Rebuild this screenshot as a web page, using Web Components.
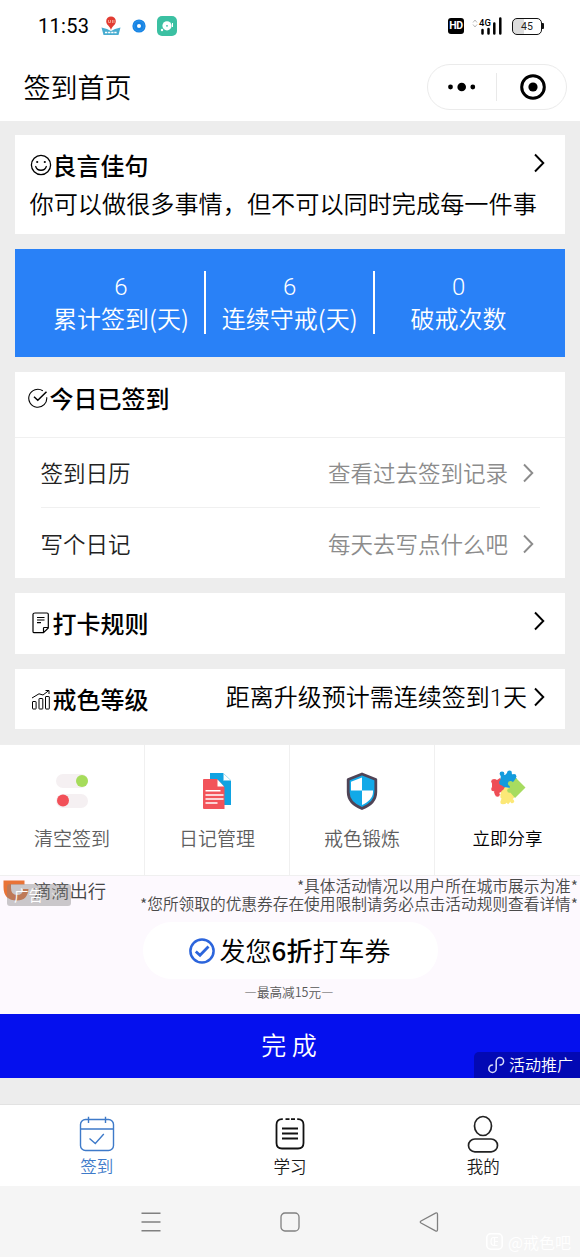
<!DOCTYPE html>
<html lang="zh-CN">
<head>
<meta charset="utf-8">
<title>签到首页</title>
<style>
html,body{margin:0;padding:0}
body{width:580px;height:1257px;overflow:hidden;background:#ededed;color:#000;font-family:"Noto Sans CJK SC",sans-serif;font-weight:350;line-height:1}
</style>
</head>
<body>
<checkin-app></checkin-app>
<script>
const define = (name, css, html) => {
  const t = document.createElement('template');
  t.innerHTML = `<style>*{box-sizing:border-box}:host{display:block;box-sizing:border-box;white-space:nowrap}svg{display:block}${css}</style>${html}`;
  customElements.define(name, class extends HTMLElement {
    constructor() {
      super();
      this.attachShadow({ mode: 'open' }).append(t.content.cloneNode(true));
    }
  });
};

const icons = {
  map: [20, 20, `<path d="M.5 11.500 6 13l4 2 4-2 5.500-1.500-2 7.500H2.500z" fill="#48acd0"/><path d="M4 16.500h12" stroke="#fff" stroke-width="1.600" stroke-dasharray="2.300 .8"/><path d="M10 14C9 10 5.200 9 5.200 5.200a4.800 4.800 0 0 1 9.600 0C14.800 9 11 10 10 14z" fill="#e23c32"/><path d="M7.500 4v2.500h2V4M11.500 4v3M13 4v3" stroke="#f7b2a0" fill="none" stroke-width=".8"/>`],
  blueDot: [14, 14, `<circle cx="7" cy="7" r="6.600" fill="#1684e4"/><circle cx="7" cy="7" r="5" fill="none" stroke="#2f93ea"/><circle cx="7" cy="7" r="2" fill="#fff"/>`],
  green: [20, 20, `<rect width="20" height="20" rx="5" fill="#3bc0a2"/><circle cx="10" cy="9.800" r="4.600" fill="#fff"/><circle cx="10" cy="9.800" r=".9" fill="#3bc0a2"/><circle cx="5" cy="14" r="1.200" fill="#fff"/><path d="M15.500 7v4" stroke="#fff"/>`],
  signal: [31, 18, `<path d="M1 5.500 3 3l2 2.500M1 7.500 3 10l2-2.500" fill="none" stroke="#aaa" stroke-width=".8"/><path d="M10.500 13v3.500M16.500 12v4.500M22.300 6.500v10M28.300 1.500v15" stroke="#000" stroke-width="2.500" stroke-linecap="round"/>`],
  dots: [28, 10, `<circle cx="2.500" cy="5" r="2.400"/><circle cx="13.700" cy="5" r="4.300"/><circle cx="24.800" cy="5" r="2.400"/>`],
  target: [26, 26, `<circle cx="13" cy="13" r="11.300" fill="none" stroke="#000" stroke-width="3"/><circle cx="13" cy="13" r="4.600"/>`],
  chevron: [12, 20, `<path d="M2 1.500 10.300 10 2 18.500" fill="none" stroke="currentColor" stroke-width="1.900"/>`],
  smile: [22, 22, `<g fill="none" stroke="#000" stroke-width="1.300"><circle cx="11" cy="11" r="9.600"/><path d="M5.700 12.500c1.500 5 9.100 5 10.600 0" stroke-linecap="round"/></g><circle cx="7.200" cy="8" r="1.100"/><circle cx="14.800" cy="8" r="1.100"/>`],
  done: [20, 20, `<path d="M14.800 2.800A9 9 0 1 0 18.700 9.200" fill="none" stroke="#000" stroke-width="1.100"/><path d="M6 8.800 9.800 12.300 18.500 3.800" fill="none" stroke="#000" stroke-width="1.500"/>`],
  note: [18, 22, `<path d="M3 1h12q1.300 0 1.300 1.300V16L11.500 20.700H2.300Q1 20.700 1 19.400V2.300Q1 1 3 1zM16.300 15.500h-4q-.8 0-.8.800v4.500M5 5.500h7.500M5 8h7.500M5 10.700h4" fill="none" stroke="#000" stroke-width="1.200"/>`],
  chart: [20, 21, `<g fill="none" stroke="#000" stroke-width="1"><rect x="1.500" y="12.500" width="3.600" height="7.500" rx=".5"/><rect x="8" y="9.500" width="3.800" height="10.500" rx=".5"/><rect x="14.500" y="7.500" width="3.800" height="12.500" rx=".5"/><path d="M1 9 8 4.800 12 6 17.500 1.800M14.500 1.500h3.500v3.500"/></g>`],
  toggles: [36, 36, `<rect x="2" y="1" width="32" height="14" rx="7" fill="#f5f0f2"/><circle cx="28" cy="8" r="6" fill="#a6dc5b"/><rect x="2" y="21" width="32" height="14" rx="7" fill="#f5f0f2"/><circle cx="9" cy="27.500" r="6" fill="#f25058"/>`],
  docs: [30, 38, `<path d="M8 1h13l8 8v24H8z" fill="#10a3e2"/><path d="M21.500 1.500v7H29z" fill="#fff" stroke="#80cceb" stroke-width=".6"/><path d="M2 7h13l7.500 8v22H2q-1 0-1-1V8q0-1 1-1z" fill="#f2535a"/><path d="M15.500 7.500v7H22z" fill="#fff"/><path d="M3.500 18.800h15M3.500 22.900h18M3.500 27h18M3.500 31.100h12" stroke="#fff" stroke-width="1.500"/>`],
  shield: [32, 38, `<path d="M16 2 29.800 7.500V20c0 8-6 13.500-13.800 16.500C8.200 33.500 2.200 28 2.200 20V7.500z" fill="#12a9e8" stroke="#504456" stroke-width="2.800" stroke-linejoin="round"/><path d="M16 5.500V18.500H5V9.700zM16 18.500h11V20c0 6-5 10.500-11 13z" fill="#fff"/>`],
  puzzle: [36, 36, `<g transform="rotate(42 18 18)"><g fill="#fce877"><rect x="18" y="19" width="11" height="11"/><circle cx="24" cy="31" r="2.500"/><circle cx="30" cy="25" r="2"/></g></g><g fill="#ee4e56"><path d="m2 10 3-1 2 1 3-2 3 3 3 8-3 4-2-1-2 1-1 3-3-1-1-3 1-3-3-2z"/><circle cx="3.500" cy="11.500" r="2.300"/><circle cx="3.500" cy="19" r="2.300"/><circle cx="7.500" cy="24.500" r="2.300"/></g><g fill="#fce877"><path d="m15 17 5 1 5 7-10 9-4-4 1-3-2-2z"/><circle cx="12.500" cy="32" r="2.200"/><circle cx="14" cy="23" r="3"/></g><g fill="#139bdd"><path d="m11 4 4 1 3-3 3 1 6 6-7 9-6-1-4-3z"/><circle cx="12" cy="3.800" r="2.400"/><circle cx="19.500" cy="3" r="2.400"/><circle cx="24" cy="6.500" r="2.400"/><circle cx="12" cy="12.500" r="2.800"/></g><g fill="#a7dc60"><path d="m26 8 9.500 9.500L25 28l-6-7 1-6 4-4z"/><circle cx="20.500" cy="13.500" r="2.600"/><circle cx="19.500" cy="20.500" r="2.300"/></g>`],
  didi: [26, 23, `<path d="M.5 1.500h21v4H8V9q0 7 6 7t6-6h5.500q-1 11.500-11.500 11.500Q.5 21.500.5 8z" fill="#e97337"/>`],
  circleCheck: [28, 28, `<circle cx="14" cy="14" r="11.600" fill="none" stroke="#2c65dc" stroke-width="2.500"/><path d="M7.800 14.500 12 18.300 20.500 9.500" fill="none" stroke="#2c65dc" stroke-width="2.800"/>`],
  mini: [18, 18, `<path d="M5.500 9a3.700 3.700 0 1 0 3.700 3.700V5.300A3.700 3.700 0 1 1 13 9" fill="none" stroke="#d9dcfa" stroke-width="1.500" stroke-linecap="round"/>`],
  calendar: [36, 36, `<g fill="none" stroke="#3e7ac9" stroke-width="1.400"><rect x="1.500" y="3.500" width="33" height="31" rx="5"/><path d="M1.500 13h33M9.500.8V7M26.500.8V7M10.500 22.500l5.800 5 8.500-9.500"/></g>`],
  study: [30, 34, `<g fill="none" stroke="#111" stroke-width="1.800"><path d="M7.800 2.200H7Q1.500 2.200 1.500 7.700V26q0 5.500 5.500 5.500h16q5.500 0 5.500-5.500V7.700q0-5.500-5.500-5.500h-.8M10.500 2.200h4M16 2.200h4"/><path d="M7 11.500h16M7 16.500h16M7 21.500h16"/></g>`],
  user: [34, 38, `<g fill="none" stroke="#222" stroke-width="1.700"><ellipse cx="17" cy="11" rx="8.500" ry="9.500"/><rect x="2.500" y="24" width="29" height="12.800" rx="6.400"/></g>`],
  menu: [20, 20, `<path d="M.5 1.300h19M.5 10h19M.5 18.800h19" stroke="#808080" stroke-width="1.400"/>`],
  home: [20, 20, `<rect x="1" y="1" width="18" height="18" rx="4" fill="none" stroke="#808080" stroke-width="1.300"/>`],
  back: [20, 20, `<path d="M2 9 16.500 1.200q2-.9 2 1.300v15q0 2.200-2 1.300L2 11Q.5 10 2 9z" fill="none" stroke="#808080" stroke-width="1.300"/>`],
  mark: [17, 17, `<rect x=".8" y=".8" width="15.400" height="15.400" rx="4" fill="none" stroke="#fff" stroke-width="1.600"/><path d="M12 4.500H7.500Q5 4.500 5 8.500t3 4h3.500M8.500 8.500H12M8.500 4v8" fill="none" stroke="#fff" stroke-width="1.200"/>`]
};
customElements.define('ui-icon', class extends HTMLElement {
  constructor() { super(); this.attachShadow({ mode: 'open' }); }
  connectedCallback() {
    const [w, h, d] = icons[this.getAttribute('name')];
    this.shadowRoot.innerHTML = `<style>:host{display:block;flex:none;width:${w}px;height:${h}px}svg{display:block}</style><svg width="${w}" height="${h}" viewBox="0 0 ${w} ${h}">${d}</svg>`;
  }
});

define('status-bar', `
:host{display:flex;align-items:center;height:52px;padding:0 36px 0 38px;background:#fff}
.time{font:400 20px/20px Roboto,sans-serif;width:63px;letter-spacing:.3px}
.right{margin-left:auto;display:flex;align-items:center}
.hd{width:16px;height:16px;border-radius:3px;background:#000;color:#fff;font:bold 10.500px/16px Roboto,sans-serif;text-align:center;letter-spacing:-.3px}
.sig{position:relative;margin-left:8px}
.g{position:absolute;left:7px;top:1px;font:500 9.500px/9px Roboto,sans-serif}
.bat{margin-left:9px;width:30px;height:17px;border:1.500px solid #111;border-radius:5px;background:linear-gradient(90deg,#ddd 40%,#fff 40%);font:10.500px/15px Roboto,sans-serif;text-align:center;color:#222}
.cap{width:2px;height:6px;background:#111;border-radius:0 1px 1px 0}
`, `<span class="time">11:53</span><ui-icon name="map"></ui-icon><ui-icon name="blueDot" style="margin-left:11px"></ui-icon><ui-icon name="green" style="margin-left:11px"></ui-icon>
<div class="right"><span class="hd">HD</span><div class="sig"><ui-icon name="signal"></ui-icon><span class="g">4G</span></div><div class="bat">45</div><i class="cap"></i></div>`);

define('nav-header', `
:host{display:flex;align-items:center;height:69px;padding:0 13px 0 23.500px;background:#fff}
.t{font-size:27px;padding-bottom:1px}
.cap{margin-left:auto;display:flex;align-items:center;width:140px;height:46px;border:1px solid #ebebeb;border-radius:23px;padding-left:20px}
.sep{width:1px;height:28px;background:#e9e9e9;margin:0 23px 0 20px}
`, `<span class="t"><slot></slot></span><div class="cap"><ui-icon name="dots"></ui-icon><i class="sep"></i><ui-icon name="target"></ui-icon></div>`);

define('info-card', `
:host{background:#fff;padding:17px 20px 0 15px}
.head{display:flex;align-items:center;height:26px}
.title{font-size:24px;font-weight:500;margin-left:1px;padding-bottom:1px}
.more{margin-left:auto;display:flex;align-items:center;gap:6px;font-size:24px;margin-bottom:5px}
`, `<div class="head"><slot name="icon"></slot><span class="title"><slot name="title"></slot></span><div class="more"><slot name="note"></slot><slot name="arrow"></slot></div></div><slot></slot>`);

define('stat-board', `:host{display:flex;height:108px;padding:0 21px 2px 23px;background:#2981f7;color:#fff;align-items:center}`, `<slot></slot>`);
define('stat-item', `
:host{flex:1;height:63px;display:flex;flex-direction:column;align-items:center;border-right:2px solid #fff;font-size:24px;line-height:32px}
:host(:last-child){border-right-color:transparent}
.n{font-family:Roboto,sans-serif;font-weight:300}
`, `<span class="n"><slot name="n"></slot></span><span style="margin-top:-1px"><slot></slot></span>`);

define('list-row', `
:host{display:flex;align-items:center;height:71px;margin:0 25px 0 26px;font-size:22.500px;color:#222}
:host(:not(:last-child)){border-bottom:1px solid #f0f0f0;height:70px}
.v{margin-left:auto;color:#8c8c8c;display:flex;align-items:center;margin-right:6px;gap:14px}
`, `<span><slot></slot></span><div class="v"><span><slot name="v"></slot></span><ui-icon name="chevron"></ui-icon></div>`);

define('menu-grid', `:host{display:grid;grid-template-columns:repeat(4,1fr);height:132px;margin-top:15px;background:#fff;border-top:1px solid #eee}`, `<slot></slot>`);
define('menu-item', `
:host{display:flex;flex-direction:column;align-items:center;border-right:1px solid #f0f0f0;border-bottom:1px solid #f0f0f0;font-size:19px;color:#5f5f5f}
:host(:last-child){border-right:0}
.i{height:74px;padding-top:17px;display:flex;align-items:center}
.l{height:38px;line-height:38px}
`, `<div class="i"><slot name="icon"></slot></div><span class="l"><slot></slot></span>`);

define('ad-banner', `
:host{position:relative;height:202px;background:#fdf9fe;display:flex;flex-direction:column;align-items:center}
.top{display:flex;align-self:stretch;height:41px;padding:3px 2px 0 0;position:relative}
.brand{display:flex;font-size:18.300px;color:#444;height:23px;align-items:center;padding-left:3px;gap:4px}
.terms{position:absolute;right:2px;top:1px;font-size:15.700px;line-height:18px;color:#4a4a4a;text-align:right}
.badge{position:absolute;left:7px;top:8px;width:64px;height:22px;border-radius:3px;background:rgba(130,130,130,.42);color:#fff;font-size:14.500px;line-height:20px;padding-left:7px;display:flex;align-items:center;gap:8px}
.pill{margin-top:5px;width:295px;height:57px;border-radius:29px;background:#fff;display:flex;align-items:center;justify-content:center;gap:4px;font-size:26px;padding-right:2px}
.pill span{padding-bottom:1px}
b{font-weight:500}
.sub{font-size:12.600px;color:#555;margin-top:7px;line-height:12px;padding-right:2px}
.btn{position:relative;margin-top:auto;align-self:stretch;height:64px;background:#0510ee;color:#fff;font-size:25px;line-height:61px;text-align:center;padding-right:2px}
.tag{position:absolute;right:0;bottom:0;width:106px;height:26px;border-radius:5px 0 0 0;background:#0309b4;display:flex;align-items:center;gap:4px;padding-left:13px;font-size:16px;line-height:24px}
.tag span{padding-bottom:2px}
`, `<div class="top"><div class="brand"><ui-icon name="didi"></ui-icon><span>滴滴出行</span></div><div class="terms"><div>*具体活动情况以用户所在城市展示为准*</div><div>*您所领取的优惠券存在使用限制请务必点击活动规则查看详情*</div></div>
<div class="badge"><span>广告</span><svg width="9" height="6"><path d="M1 1l3.500 3.500L8 1" fill="none" stroke="#ddd" stroke-width="1.300"/></svg></div></div>
<div class="pill"><ui-icon name="circleCheck"></ui-icon><span>发您<b>6折</b>打车券</span></div><div class="sub">—最高减15元—</div>
<div class="btn">完 成<div class="tag"><ui-icon name="mini"></ui-icon><span>活动推广</span></div></div>`);

define('tab-bar', `:host{display:grid;grid-template-columns:repeat(3,1fr);height:82px;margin-top:26px;background:#fff;border-top:1px solid #e2e2e2}`, `<slot></slot>`);
define('tab-item', `
:host{display:flex;flex-direction:column;align-items:center;font-size:16.500px;color:#1a1a1a}
:host([active]){color:#3e7ac9}
.i{height:38px;margin-top:10px;display:flex;align-items:center}
.l{line-height:22px;margin-top:2px}
`, `<div class="i"><slot name="icon"></slot></div><span class="l"><slot></slot></span>`);

define('system-nav', `
:host{position:relative;display:flex;justify-content:center;gap:119px;height:71px;padding-top:26px;background:#f5f5f5}
.wm{position:absolute;right:9px;bottom:7px;display:flex;align-items:center;gap:5px;color:#fff;font-size:16px}
`, `<ui-icon name="menu"></ui-icon><ui-icon name="home"></ui-icon><ui-icon name="back"></ui-icon><div class="wm"><ui-icon name="mark"></ui-icon><span>@戒色吧</span></div>`);

define('checkin-app', `
:host{display:flex;flex-direction:column;height:1257px}
main{display:flex;flex-direction:column;gap:15px;padding:14px 15px 0 14.500px}
.quote{font-size:24.170px;margin-top:9px;line-height:32px}
.rows{border-top:1px solid #f0f0f0;margin:26px -20px 0 -15px}
.one{font-family:Roboto,sans-serif}
`, `<status-bar></status-bar><nav-header>签到首页</nav-header>
<main>
<info-card style="height:99px"><ui-icon slot="icon" name="smile"></ui-icon><span slot="title">良言佳句</span><ui-icon slot="arrow" name="chevron"></ui-icon><div class="quote">你可以做很多事情，但不可以同时完成每一件事</div></info-card>
<stat-board><stat-item><span slot="n">6</span>累计签到(天)</stat-item><stat-item><span slot="n">6</span>连续守戒(天)</stat-item><stat-item><span slot="n">0</span>破戒次数</stat-item></stat-board>
<info-card style="height:206px;padding-top:13px"><ui-icon slot="icon" name="done" style="margin:0 1px 0 -2px"></ui-icon><span slot="title">今日已签到</span>
<div class="rows"><list-row>签到日历<span slot="v">查看过去签到记录</span></list-row><list-row>写个日记<span slot="v">每天去写点什么吧</span></list-row></div></info-card>
<info-card style="height:61px"><ui-icon slot="icon" name="note" style="margin:0 2px"></ui-icon><span slot="title">打卡规则</span><ui-icon slot="arrow" name="chevron"></ui-icon></info-card>
<info-card style="height:60px"><ui-icon slot="icon" name="chart" style="margin:0 1px"></ui-icon><span slot="title">戒色等级</span><span slot="note">距离升级预计需连续签到<span class="one">1</span>天</span><ui-icon slot="arrow" name="chevron"></ui-icon></info-card>
</main>
<menu-grid><menu-item><ui-icon slot="icon" name="toggles"></ui-icon>清空签到</menu-item><menu-item><ui-icon slot="icon" name="docs"></ui-icon>日记管理</menu-item><menu-item><ui-icon slot="icon" name="shield"></ui-icon>戒色锻炼</menu-item><menu-item style="font-size:17.500px;color:#000"><ui-icon slot="icon" name="puzzle" style="margin-bottom:6px"></ui-icon>立即分享</menu-item></menu-grid>
<ad-banner></ad-banner>
<tab-bar><tab-item active><ui-icon slot="icon" name="calendar"></ui-icon>签到</tab-item><tab-item><ui-icon slot="icon" name="study"></ui-icon>学习</tab-item><tab-item><ui-icon slot="icon" name="user"></ui-icon>我的</tab-item></tab-bar>
<system-nav></system-nav>`);
</script>
</body>
</html>
